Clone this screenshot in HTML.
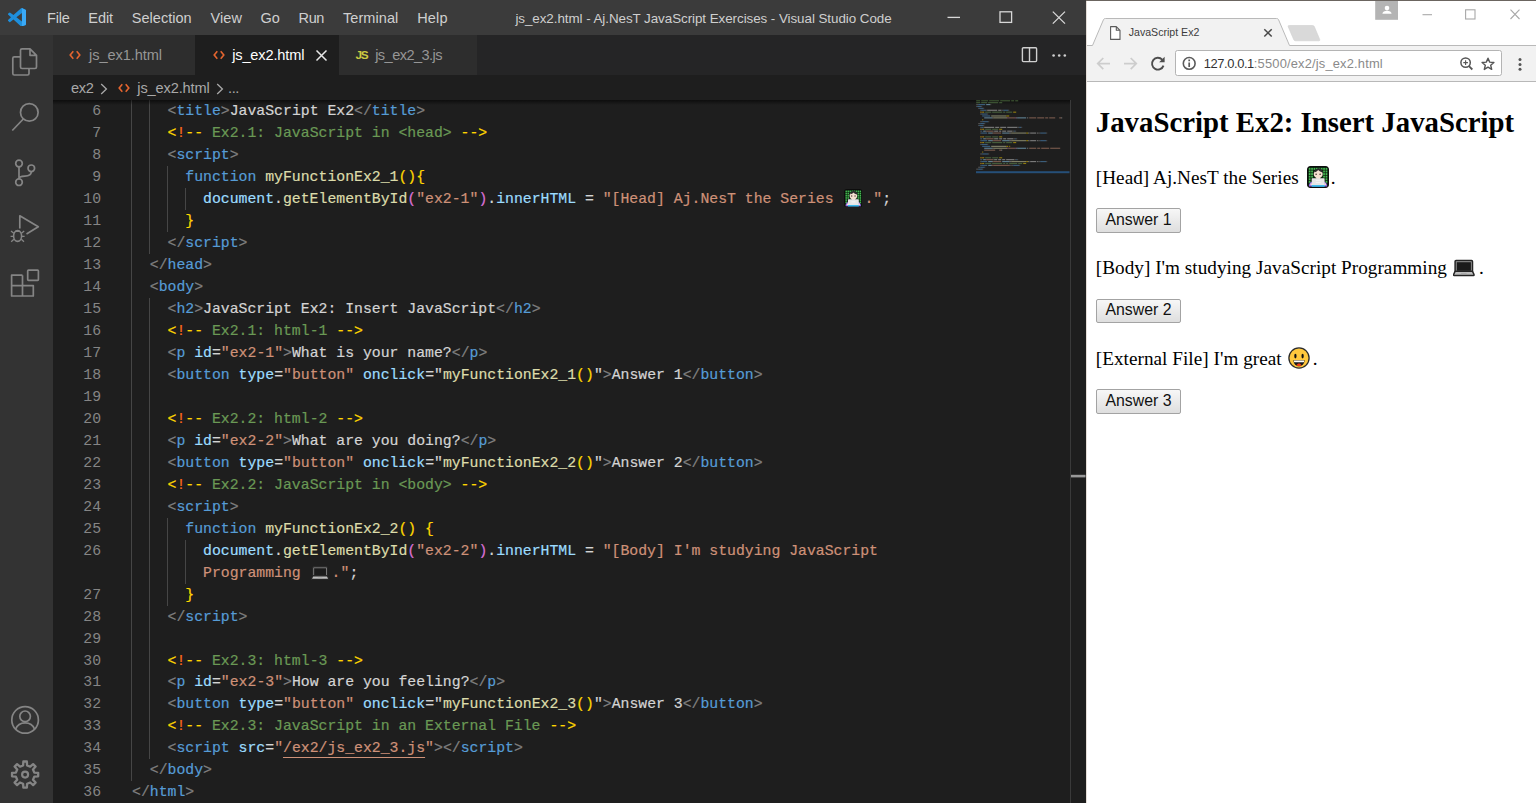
<!DOCTYPE html>
<html lang="en">
<head>
<meta charset="utf-8">
<title>js_ex2.html - Aj.NesT JavaScript Exercises - Visual Studio Code</title>
<style>
*{box-sizing:border-box}
html,body{margin:0;padding:0;width:1536px;height:803px;overflow:hidden;background:#fff}
body{position:relative;font-family:"Liberation Sans",sans-serif}
.abs{position:absolute}
/* ---------- VS Code ---------- */
#vsc{position:absolute;left:0;top:0;width:1085.5px;height:803px;background:#1e1e1e;overflow:hidden;color:#ccc;font-family:"Liberation Sans",sans-serif}
#titlebar{position:absolute;left:0;top:0;width:1086px;height:35px;background:#3b3b3b}
#titlebar .m{position:absolute;top:0.8px;height:35px;line-height:35px;font-size:15.3px;color:#cfcfcf;white-space:pre}
#wtitle{position:absolute;top:0;height:35px;line-height:35px;left:515px;font-size:15.3px;color:#cfcfcf;white-space:pre}
#actbar{position:absolute;left:0;top:35px;width:53px;height:768px;background:#333333}
#tabs{position:absolute;left:53px;top:35px;width:1033px;height:40px;background:#252526}
.tab{position:absolute;top:0;height:40px;background:#2d2d2d;font-size:15.6px;line-height:40px;color:#969696;white-space:pre}
.tab.act{background:#1e1e1e;color:#fff}
.tab .lbl{position:absolute;top:0.4px}
#crumbs{position:absolute;left:53px;top:75px;width:1033px;height:25px;background:#1e1e1e;font-size:15.3px;line-height:25px;color:#a9a9a9;white-space:pre}
#crumbs span{position:absolute;top:0.7px}
#edshadow{position:absolute;left:53px;top:100px;width:1018px;height:5px;background:linear-gradient(#000 0,rgba(0,0,0,.0) 100%);opacity:.55}
/* code */
.cl,.ln{position:absolute;height:22px;line-height:22px;font-family:"Liberation Mono",monospace;font-size:14.815px;white-space:pre}
.cl{left:132px;color:#d4d4d4;-webkit-text-stroke:0.2px currentColor}
.ln{left:53px;width:48.1px;text-align:right;color:#858585}
.ig{position:absolute;width:1px;background:#464646;display:block}
.g{color:#808080}.t{color:#569cd6}.a{color:#9cdcfe}.s{color:#ce9178}.x{color:#d4d4d4}.c{color:#6a9955}
.y{color:#ffd700}.p{color:#da70d6}.f{color:#dcdcaa}.k{color:#569cd6}.v{color:#9cdcfe}.o{color:#ff6a1a}
.u{text-decoration:underline;text-underline-offset:4.6px;text-decoration-thickness:1px}
.em{display:inline-block;width:22px;height:22px;vertical-align:top;position:relative}
.em svg{position:absolute;left:1.3px;top:0.9px}
/* ---------- Chrome ---------- */
#chr{position:absolute;left:1086px;top:0;width:450px;height:803px;background:#fff;overflow:visible;font-family:"Liberation Sans",sans-serif}
#chr .topline{position:absolute;left:0;top:0;width:450px;height:1px;background:#6b6560}
#chr .leftline{position:absolute;left:-0.500px;top:1px;width:1px;height:802px;background:#e4ddd7}
#toolbar{position:absolute;left:1px;top:46px;width:449px;height:35.700px;background:#f2f2f2;border-bottom:1px solid #b8b8b8}
#omni{position:absolute;left:89.3px;top:50.300px;width:326.500px;height:26.100px;background:#fff;border:1px solid #b4b4b4;border-radius:2.5px}
#url{position:absolute;left:117.700px;top:51px;height:25.5px;line-height:25.5px;font-size:12.9px;color:#8a8a8a;white-space:pre}
#url b{font-weight:normal;color:#333;letter-spacing:-0.400px}
#url{letter-spacing:0.170px}
#tabtitle{position:absolute;left:42.7px;top:19px;height:26px;line-height:27px;font-size:10.6px;color:#3c3c3c;white-space:pre}
#page{position:absolute;left:0;top:0;width:450px;height:803px;font-family:"Liberation Serif",serif;color:#000;font-size:19.2px}
#page h2{position:absolute;left:9.8px;top:104.5px;font-size:28.8px;line-height:34px;margin:0;font-weight:bold;white-space:nowrap}
#page p{letter-spacing:0.03px;position:absolute;left:9.8px;margin:0;line-height:22px;white-space:nowrap}
#page button{font-family:"Liberation Sans",sans-serif;font-size:15.85px;color:#111;padding:0.400px 7.900px 2px;margin:0;border:1px solid #a3a3a3;border-radius:2px;background:linear-gradient(#f7f7f7,#dedede);height:24.6px;line-height:19px;display:block;position:absolute;left:10.2px;width:84.5px;text-align:center}
#page .emo{vertical-align:-4.4px;margin:0 2.300px 0 3px}
#ex2-3 .emo{margin-left:1.900px;margin-right:2.300px}
#ex2-2 .emo{margin-left:1.700px;margin-right:3.600px}

</style>
</head>
<body>
<div id="vsc">
  <div id="titlebar">
<svg class="abs" style="left:7.600px;top:7.600px" width="18.600" height="18.600" viewBox="0 0 100 100"><path fill="#1e8fdc" fill-rule="evenodd" d="M74.900 99.300a6.200 6.200 0 0 0 5-.2l20.600-9.900A6.250 6.250 0 0 0 100 83.600V16.400a6.250 6.250 0 0 0-3.500-5.600L75.900.9a6.200 6.200 0 0 0-7.100 1.200L29.400 38 12.200 25a4.200 4.200 0 0 0-5.300.2L1.400 30.200a4.200 4.200 0 0 0 0 6.200L16.200 50 1.400 63.600a4.200 4.200 0 0 0 0 6.200l5.500 5a4.200 4.200 0 0 0 5.300.2l17.200-13 39.400 36a6.200 6.200 0 0 0 2.100 1.400zM75 27.300 45.100 50 75 72.700z"/><path fill="#3aa9f6" d="M75 .6 96.500 10.800Q100 12.600 100 16.400V83.600Q100 87.400 96.500 89.200L75 99.400Z"/></svg>
<span class="m" style="left:47.0px;font-size:14.50px;letter-spacing:-0.216px;">File</span>
<span class="m" style="left:88.3px;font-size:14.50px;letter-spacing:-0.071px;">Edit</span>
<span class="m" style="left:131.8px;font-size:14.50px;letter-spacing:0.028px;">Selection</span>
<span class="m" style="left:210.5px;font-size:14.50px;letter-spacing:0.083px;">View</span>
<span class="m" style="left:260.5px;font-size:14.50px;letter-spacing:0.079px;">Go</span>
<span class="m" style="left:298.6px;font-size:14.50px;letter-spacing:-0.400px;">Run</span>
<span class="m" style="left:343.0px;font-size:14.50px;letter-spacing:0.063px;">Terminal</span>
<span class="m" style="left:417.2px;font-size:14.50px;letter-spacing:0.170px;">Help</span>
<span class="m" style="left:515.4px;font-size:13.40px;letter-spacing:-0.058px;">js_ex2.html - Aj.NesT JavaScript Exercises - Visual Studio Code</span>
<svg class="abs" style="left:940px;top:5px" width="140" height="26" viewBox="0 0 140 26" fill="none" stroke="#d8d8d8" stroke-width="1.3"><path d="M7.500 12.400H20"/><rect x="60" y="6.800" width="11.600" height="10.600"/><path d="M112.800 6.600 125 18.600M125 6.600 112.800 18.600"/></svg>
  </div>
  <div id="actbar">
<svg class="abs" style="left:0;top:0" width="53" height="768" viewBox="0 35 53 768" fill="none" stroke="#858585" stroke-width="1.700" stroke-linejoin="round" stroke-linecap="butt">
<path d="M30 48.800H22a1.500 1.500 0 0 0-1.500 1.500V67a1.500 1.500 0 0 0 1.500 1.500H35a1.500 1.500 0 0 0 1.500-1.500V55.300L30 48.800V55.300H36.500"/>
<path d="M20.500 56.800H14.300a1.500 1.500 0 0 0-1.500 1.500V73.500a1.500 1.500 0 0 0 1.500 1.500H27.500a1.500 1.500 0 0 0 1.500-1.500V68.500"/>
<circle cx="29.300" cy="112.400" r="8.800"/><path d="M23.300 119 12.300 130.500"/>
<circle cx="19" cy="163.500" r="3.300"/><circle cx="31.300" cy="168.300" r="3.300"/><circle cx="19" cy="182.200" r="3.300"/><path d="M19 166.800V178.900M31.300 171.600c0 3.500-3 4.600-6.500 4.600-3.200 0-5.800 0.700-5.800 2.700"/>
<path d="M19.800 228.500V215.800L38.300 226.800 26.500 234"/>
<ellipse cx="17.600" cy="236" rx="4" ry="5.400" stroke-width="1.600"/><path stroke-width="1.300" d="M13.800 233.300 11 231M13.600 236.400H10.600M13.900 239.200 11.200 241.700M21.400 233.300 24.200 231M21.600 236.400H24.600M21.300 239.200 24 241.700M15 231.400h5.200"/>
<path d="M22.500 275.200H11.600V296H33.300V285.600H11.600M22.500 275.200V296"/><rect x="27.700" y="270.200" width="10.700" height="10.200" rx="0.800"/>
<circle cx="25.100" cy="719.900" r="13.300"/><circle cx="25.100" cy="716.300" r="5.300"/><path d="M15.600 729.200c1.600-4.200 5-6.300 9.500-6.300s7.900 2.100 9.500 6.300"/>
<path stroke-width="2.300" d="M23.12 765.41 L23.34 761.52 L26.86 761.52 L27.08 765.41 L30.20 766.70 L33.11 764.11 L35.59 766.59 L33.00 769.50 L34.29 772.62 L38.18 772.84 L38.18 776.36 L34.29 776.58 L33.00 779.70 L35.59 782.61 L33.11 785.09 L30.20 782.50 L27.08 783.79 L26.86 787.68 L23.34 787.68 L23.12 783.79 L20.00 782.50 L17.09 785.09 L14.61 782.61 L17.20 779.70 L15.91 776.58 L12.02 776.36 L12.02 772.84 L15.91 772.62 L17.20 769.50 L14.61 766.59 L17.09 764.11 L20.00 766.70Z"/><circle cx="25.100" cy="774.600" r="3" stroke-width="2.200"/>
</svg>
  </div>
  <div id="tabs">
<div class="tab" style="left:0;width:142px"><svg class="abs" style="left:16px;top:15px" width="12" height="10" viewBox="0 0 12 10" fill="none" stroke="#e5652f" stroke-width="1.600"><path d="M4.300 1.300 1.200 5l3.100 3.700M7.700 1.300 10.800 5 7.700 8.700"/></svg><span class="lbl" style="left:36.0px;font-size:14.60px;letter-spacing:-0.077px;">js_ex1.html</span></div>
<div class="tab act" style="left:142px;width:143.600px"><svg class="abs" style="left:17.5px;top:15px" width="12" height="10" viewBox="0 0 12 10" fill="none" stroke="#e5652f" stroke-width="1.600"><path d="M4.300 1.300 1.200 5l3.100 3.700M7.700 1.300 10.800 5 7.700 8.700"/></svg><span class="lbl" style="left:37.2px;font-size:14.60px;letter-spacing:-0.158px;">js_ex2.html</span><svg class="abs" style="left:120px;top:14px" width="13" height="13" viewBox="0 0 13 13" fill="none" stroke="#e8e8e8" stroke-width="1.500"><path d="M1.500 1.500 11.500 11.500M11.500 1.500 1.500 11.500"/></svg></div>
<div class="tab" style="left:285.600px;width:138.500px"><span class="lbl" style="left:17.0px;font-size:11.80px;letter-spacing:-1.367px;color:#cbcb41;font-weight:bold;top:-0.500px">JS</span><span class="lbl" style="left:36.6px;font-size:14.60px;letter-spacing:-0.568px;">js_ex2_3.js</span></div>
<svg class="abs" style="left:968px;top:11px" width="18" height="18" viewBox="0 0 18 18" fill="none" stroke="#d0d0d0" stroke-width="1.400"><rect x="1.400" y="1.800" width="14.200" height="13.800" rx="1"/><path d="M8.500 1.800V15.600"/></svg>
<svg class="abs" style="left:998px;top:18px" width="16" height="5" viewBox="0 0 16 5" fill="#d0d0d0"><circle cx="2.600" cy="2.500" r="1.300"/><circle cx="8.200" cy="2.500" r="1.300"/><circle cx="13.800" cy="2.500" r="1.300"/></svg>
  </div>
  <div id="crumbs">
<span style="left:18.0px;font-size:14.60px;letter-spacing:-0.380px;">ex2</span>
<svg class="abs" style="left:47.0px;top:7.5px" width="8" height="12" viewBox="0 0 8 12" fill="none" stroke="#a9a9a9" stroke-width="1.300"><path d="M1.200 1 6.400 6 1.200 11"/></svg>
<svg class="abs" style="left:65px;top:7.8px" width="12" height="10" viewBox="0 0 12 10" fill="none" stroke="#e5652f" stroke-width="1.600"><path d="M4.300 1.300 1.200 5l3.100 3.700M7.700 1.300 10.800 5 7.700 8.700"/></svg>
<span style="left:84.3px;font-size:14.60px;letter-spacing:-0.131px;">js_ex2.html</span>
<svg class="abs" style="left:162.6px;top:7.5px" width="8" height="12" viewBox="0 0 8 12" fill="none" stroke="#a9a9a9" stroke-width="1.300"><path d="M1.200 1 6.400 6 1.200 11"/></svg>
<span style="left:175.1px;font-size:14.60px;letter-spacing:-0.523px;">...</span>
  </div>
  <div id="editor">
<i class="ig" style="left:131.3px;top:100.20px;height:681.13px"></i>
<i class="ig" style="left:149.1px;top:100.20px;height:153.80px"></i>
<i class="ig" style="left:149.1px;top:297.95px;height:461.41px"></i>
<i class="ig" style="left:166.9px;top:166.12px;height:65.92px"></i>
<i class="ig" style="left:166.9px;top:517.67px;height:87.89px"></i>
<i class="ig" style="left:184.6px;top:188.09px;height:21.97px"></i>
<i class="ig" style="left:184.6px;top:539.64px;height:43.94px"></i>
<div class="ln" style="top:100.20px">6</div>
<div class="cl" style="top:100.20px">    <span class="g">&lt;</span><span class="t">title</span><span class="g">&gt;</span><span class="x">JavaScript Ex2</span><span class="g">&lt;/</span><span class="t">title</span><span class="g">&gt;</span></div>
<div class="ln" style="top:122.17px">7</div>
<div class="cl" style="top:122.17px">    <span class="y">&lt;</span><span class="o">!</span><span class="y">--</span><span class="c"> Ex2.1: JavaScript in &lt;head&gt; </span><span class="y">--&gt;</span></div>
<div class="ln" style="top:144.14px">8</div>
<div class="cl" style="top:144.14px">    <span class="g">&lt;</span><span class="t">script</span><span class="g">&gt;</span></div>
<div class="ln" style="top:166.12px">9</div>
<div class="cl" style="top:166.12px">      <span class="k">function</span> <span class="f">myFunctionEx2_1</span><span class="y">(){</span></div>
<div class="ln" style="top:188.09px">10</div>
<div class="cl" style="top:188.09px">        <span class="v">document</span><span class="x">.</span><span class="f">getElementById</span><span class="p">(</span><span class="s">"ex2-1"</span><span class="p">)</span><span class="x">.</span><span class="v">innerHTML</span><span class="x"> = </span><span class="s">"[Head] Aj.NesT the Series </span><span class="em e1"><svg class="emo" role="img" aria-label="👨🏻‍💻" width="18.5" height="18.5" viewBox="0 0 22 22"><rect x="0.6" y="0.6" width="20.800" height="20.800" rx="3.200" fill="#0b240f" stroke="#0d0d0d" stroke-width="1.200"/><g fill="#45b852"><rect x="1.8" y="1.9" width="1.7" height="1.9"/><rect x="4.2" y="1.9" width="1.7" height="1.9"/><rect x="6.6" y="1.9" width="1.7" height="1.9"/><rect x="9.0" y="1.9" width="1.7" height="1.9"/><rect x="11.4" y="1.9" width="1.7" height="1.9"/><rect x="13.8" y="1.9" width="1.7" height="1.9"/><rect x="16.2" y="1.9" width="1.7" height="1.9"/><rect x="18.6" y="1.9" width="1.7" height="1.9"/><rect x="1.8" y="4.5" width="1.7" height="1.9"/><rect x="4.2" y="4.5" width="1.7" height="1.9"/><rect x="16.2" y="4.5" width="1.7" height="1.9"/><rect x="18.6" y="4.5" width="1.7" height="1.9"/><rect x="1.8" y="7.1" width="1.7" height="1.9"/><rect x="4.2" y="7.1" width="1.7" height="1.9"/><rect x="16.2" y="7.1" width="1.7" height="1.9"/><rect x="18.6" y="7.1" width="1.7" height="1.9"/><rect x="1.8" y="9.7" width="1.7" height="1.9"/><rect x="4.2" y="9.7" width="1.7" height="1.9"/><rect x="16.2" y="9.7" width="1.7" height="1.9"/><rect x="18.6" y="9.7" width="1.7" height="1.9"/><rect x="1.8" y="12.3" width="1.7" height="1.9"/><rect x="18.6" y="12.3" width="1.7" height="1.9"/><rect x="1.8" y="14.9" width="1.7" height="1.9"/><rect x="18.6" y="14.9" width="1.7" height="1.9"/></g><path d="M1.800 20.600c0-3 1.400-4.800 3.800-5h10.800c2.400 0.200 3.800 2 3.800 5z" fill="#9263e6"/><rect x="9.300" y="11.200" width="3.800" height="2.200" fill="#ecd0bd"/><ellipse cx="11.200" cy="8" rx="4.500" ry="4.300" fill="#f5e0d0"/><path d="M7.300 6.300c0.200-1.800 1.200-3.400 3.400-3.900 2.600-0.500 4.900 1 5.100 3.700 0 0.300-0.100 0.500-0.300 0.300-1.700-0.200-3.300-1.100-4.300-2.300-0.900 1.200-2.100 1.900-3.900 2.200z" fill="#2b2b2b"/><rect x="8.400" y="7.500" width="1.500" height="1.600" rx="0.400" fill="#5e4d45"/><rect x="12.400" y="7.500" width="1.500" height="1.600" rx="0.400" fill="#5e4d45"/><rect x="4.700" y="12.300" width="12.900" height="7.600" rx="0.500" fill="#e6e6e6"/><rect x="8.800" y="14.300" width="4.800" height="0.700" fill="#f6f6f6"/><rect x="8.800" y="16.200" width="4.800" height="0.700" fill="#f6f6f6"/><rect x="3.300" y="17.300" width="1.700" height="2" rx="0.700" fill="#f5e0d0"/><rect x="17.300" y="17.300" width="1.700" height="2" rx="0.700" fill="#f5e0d0"/><rect x="4.700" y="19.100" width="12.900" height="1.700" fill="#2fb7ea"/></svg></span><span class="s">."</span><span class="x">;</span></div>
<div class="ln" style="top:210.06px">11</div>
<div class="cl" style="top:210.06px">      <span class="y">}</span></div>
<div class="ln" style="top:232.03px">12</div>
<div class="cl" style="top:232.03px">    <span class="g">&lt;/</span><span class="t">script</span><span class="g">&gt;</span></div>
<div class="ln" style="top:254.00px">13</div>
<div class="cl" style="top:254.00px">  <span class="g">&lt;/</span><span class="t">head</span><span class="g">&gt;</span></div>
<div class="ln" style="top:275.98px">14</div>
<div class="cl" style="top:275.98px">  <span class="g">&lt;</span><span class="t">body</span><span class="g">&gt;</span></div>
<div class="ln" style="top:297.95px">15</div>
<div class="cl" style="top:297.95px">    <span class="g">&lt;</span><span class="t">h2</span><span class="g">&gt;</span><span class="x">JavaScript Ex2: Insert JavaScript</span><span class="g">&lt;/</span><span class="t">h2</span><span class="g">&gt;</span></div>
<div class="ln" style="top:319.92px">16</div>
<div class="cl" style="top:319.92px">    <span class="y">&lt;</span><span class="o">!</span><span class="y">--</span><span class="c"> Ex2.1: html-1 </span><span class="y">--&gt;</span></div>
<div class="ln" style="top:341.89px">17</div>
<div class="cl" style="top:341.89px">    <span class="g">&lt;</span><span class="t">p</span> <span class="a">id</span><span class="x">=</span><span class="s">"ex2-1"</span><span class="g">&gt;</span><span class="x">What is your name?</span><span class="g">&lt;/</span><span class="t">p</span><span class="g">&gt;</span></div>
<div class="ln" style="top:363.86px">18</div>
<div class="cl" style="top:363.86px">    <span class="g">&lt;</span><span class="t">button</span> <span class="a">type</span><span class="x">=</span><span class="s">"button"</span> <span class="a">onclick</span><span class="x">=</span><span class="x">"</span><span class="f">myFunctionEx2_1</span><span class="y">()</span><span class="x">"</span><span class="g">&gt;</span><span class="x">Answer 1</span><span class="g">&lt;/</span><span class="t">button</span><span class="g">&gt;</span></div>
<div class="ln" style="top:385.84px">19</div>
<div class="ln" style="top:407.81px">20</div>
<div class="cl" style="top:407.81px">    <span class="y">&lt;</span><span class="o">!</span><span class="y">--</span><span class="c"> Ex2.2: html-2 </span><span class="y">--&gt;</span></div>
<div class="ln" style="top:429.78px">21</div>
<div class="cl" style="top:429.78px">    <span class="g">&lt;</span><span class="t">p</span> <span class="a">id</span><span class="x">=</span><span class="s">"ex2-2"</span><span class="g">&gt;</span><span class="x">What are you doing?</span><span class="g">&lt;/</span><span class="t">p</span><span class="g">&gt;</span></div>
<div class="ln" style="top:451.75px">22</div>
<div class="cl" style="top:451.75px">    <span class="g">&lt;</span><span class="t">button</span> <span class="a">type</span><span class="x">=</span><span class="s">"button"</span> <span class="a">onclick</span><span class="x">=</span><span class="x">"</span><span class="f">myFunctionEx2_2</span><span class="y">()</span><span class="x">"</span><span class="g">&gt;</span><span class="x">Answer 2</span><span class="g">&lt;/</span><span class="t">button</span><span class="g">&gt;</span></div>
<div class="ln" style="top:473.72px">23</div>
<div class="cl" style="top:473.72px">    <span class="y">&lt;</span><span class="o">!</span><span class="y">--</span><span class="c"> Ex2.2: JavaScript in &lt;body&gt; </span><span class="y">--&gt;</span></div>
<div class="ln" style="top:495.70px">24</div>
<div class="cl" style="top:495.70px">    <span class="g">&lt;</span><span class="t">script</span><span class="g">&gt;</span></div>
<div class="ln" style="top:517.67px">25</div>
<div class="cl" style="top:517.67px">      <span class="k">function</span> <span class="f">myFunctionEx2_2</span><span class="y">()</span> <span class="y">{</span></div>
<div class="ln" style="top:539.64px">26</div>
<div class="cl" style="top:539.64px">        <span class="v">document</span><span class="x">.</span><span class="f">getElementById</span><span class="p">(</span><span class="s">"ex2-2"</span><span class="p">)</span><span class="x">.</span><span class="v">innerHTML</span><span class="x"> = </span><span class="s">"[Body] I'm studying JavaScript</span></div>
<div class="cl" style="top:561.61px">        <span class="s">Programming </span><span class="em e2"><svg class="emo" role="img" aria-label="💻" width="18.5" height="18.5" viewBox="0 0 22 22"><path d="M3 4.600h15.600a0.900 0.900 0 0 1 0.900 0.900v9.900h-17.400v-9.900a0.900 0.900 0 0 1 0.900-0.900z" fill="#9a9a9a" stroke="#242424" stroke-width="1.500" stroke-linejoin="round"/><rect x="3.700" y="6.200" width="14.200" height="8.600" fill="#1b1b1b"/><path d="M2.100 15.400h17.400l1.600 3.200a0.600 0.600 0 0 1-0.550 0.900h-19.500a0.600 0.600 0 0 1-0.550-0.900z" fill="#bdbdbd" stroke="#242424" stroke-width="1.400" stroke-linejoin="round"/><rect x="8" y="17.300" width="5.600" height="0.900" fill="#a3a3a3"/></svg></span><span class="s">."</span><span class="x">;</span></div>
<div class="ln" style="top:583.58px">27</div>
<div class="cl" style="top:583.58px">      <span class="y">}</span></div>
<div class="ln" style="top:605.56px">28</div>
<div class="cl" style="top:605.56px">    <span class="g">&lt;/</span><span class="t">script</span><span class="g">&gt;</span></div>
<div class="ln" style="top:627.53px">29</div>
<div class="ln" style="top:649.50px">30</div>
<div class="cl" style="top:649.50px">    <span class="y">&lt;</span><span class="o">!</span><span class="y">--</span><span class="c"> Ex2.3: html-3 </span><span class="y">--&gt;</span></div>
<div class="ln" style="top:671.47px">31</div>
<div class="cl" style="top:671.47px">    <span class="g">&lt;</span><span class="t">p</span> <span class="a">id</span><span class="x">=</span><span class="s">"ex2-3"</span><span class="g">&gt;</span><span class="x">How are you feeling?</span><span class="g">&lt;/</span><span class="t">p</span><span class="g">&gt;</span></div>
<div class="ln" style="top:693.44px">32</div>
<div class="cl" style="top:693.44px">    <span class="g">&lt;</span><span class="t">button</span> <span class="a">type</span><span class="x">=</span><span class="s">"button"</span> <span class="a">onclick</span><span class="x">=</span><span class="x">"</span><span class="f">myFunctionEx2_3</span><span class="y">()</span><span class="x">"</span><span class="g">&gt;</span><span class="x">Answer 3</span><span class="g">&lt;/</span><span class="t">button</span><span class="g">&gt;</span></div>
<div class="ln" style="top:715.42px">33</div>
<div class="cl" style="top:715.42px">    <span class="y">&lt;</span><span class="o">!</span><span class="y">--</span><span class="c"> Ex2.3: JavaScript in an External File </span><span class="y">--&gt;</span></div>
<div class="ln" style="top:737.39px">34</div>
<div class="cl" style="top:737.39px">    <span class="g">&lt;</span><span class="t">script</span> <span class="a">src</span><span class="x">=</span><span class="s">"</span><span class="s u">/ex2/js_ex2_3.js</span><span class="s">"</span><span class="g">&gt;</span><span class="g">&lt;/</span><span class="t">script</span><span class="g">&gt;</span></div>
<div class="ln" style="top:759.36px">35</div>
<div class="cl" style="top:759.36px">  <span class="g">&lt;/</span><span class="t">body</span><span class="g">&gt;</span></div>
<div class="ln" style="top:781.33px">36</div>
<div class="cl" style="top:781.33px"><span class="g">&lt;/</span><span class="t">html</span><span class="g">&gt;</span></div>
  </div>
  <div id="edshadow"></div>
<svg class="abs" style="left:0;top:0" width="1086" height="803" viewBox="0 0 1086 803">
<g opacity="0.5">
<rect x="976.20" y="100.20" width="4.00" height="1.150" fill="#6a9955"/>
<rect x="981.20" y="100.20" width="7.00" height="1.150" fill="#6a9955"/>
<rect x="989.20" y="100.20" width="10.00" height="1.150" fill="#6a9955"/>
<rect x="1000.20" y="100.20" width="10.00" height="1.150" fill="#6a9955"/>
<rect x="1011.20" y="100.20" width="3.00" height="1.150" fill="#6a9955"/>
<rect x="1015.20" y="100.20" width="3.00" height="1.150" fill="#6a9955"/>
<rect x="976.20" y="102.10" width="4.00" height="1.150" fill="#6a9955"/>
<rect x="981.20" y="102.10" width="6.00" height="1.150" fill="#6a9955"/>
<rect x="988.20" y="102.10" width="10.00" height="1.150" fill="#6a9955"/>
<rect x="999.20" y="102.10" width="3.00" height="1.150" fill="#6a9955"/>
<rect x="976.20" y="104.00" width="2.00" height="1.150" fill="#808080"/>
<rect x="978.20" y="104.00" width="7.00" height="1.150" fill="#569cd6"/>
<rect x="986.20" y="104.00" width="4.00" height="1.150" fill="#9cdcfe"/>
<rect x="990.20" y="104.00" width="1.00" height="1.150" fill="#808080"/>
<rect x="976.20" y="105.90" width="1.00" height="1.150" fill="#808080"/>
<rect x="977.20" y="105.90" width="4.00" height="1.150" fill="#569cd6"/>
<rect x="981.20" y="105.90" width="1.00" height="1.150" fill="#808080"/>
<rect x="978.20" y="107.80" width="1.00" height="1.150" fill="#808080"/>
<rect x="979.20" y="107.80" width="4.00" height="1.150" fill="#569cd6"/>
<rect x="983.20" y="107.80" width="1.00" height="1.150" fill="#808080"/>
<rect x="980.20" y="109.70" width="1.00" height="1.150" fill="#808080"/>
<rect x="981.20" y="109.70" width="5.00" height="1.150" fill="#569cd6"/>
<rect x="986.20" y="109.70" width="1.00" height="1.150" fill="#808080"/>
<rect x="987.20" y="109.70" width="10.00" height="1.150" fill="#d4d4d4"/>
<rect x="998.20" y="109.70" width="3.00" height="1.150" fill="#d4d4d4"/>
<rect x="1001.20" y="109.70" width="2.00" height="1.150" fill="#808080"/>
<rect x="1003.20" y="109.70" width="5.00" height="1.150" fill="#569cd6"/>
<rect x="1008.20" y="109.70" width="1.00" height="1.150" fill="#808080"/>
<rect x="980.20" y="111.60" width="1.00" height="1.150" fill="#ffd700"/>
<rect x="981.20" y="111.60" width="1.00" height="1.150" fill="#ff8c1a"/>
<rect x="982.20" y="111.60" width="2.00" height="1.150" fill="#ffd700"/>
<rect x="985.20" y="111.60" width="6.00" height="1.150" fill="#6a9955"/>
<rect x="992.20" y="111.60" width="10.00" height="1.150" fill="#6a9955"/>
<rect x="1003.20" y="111.60" width="2.00" height="1.150" fill="#6a9955"/>
<rect x="1006.20" y="111.60" width="6.00" height="1.150" fill="#6a9955"/>
<rect x="1013.20" y="111.60" width="3.00" height="1.150" fill="#ffd700"/>
<rect x="980.20" y="113.50" width="1.00" height="1.150" fill="#808080"/>
<rect x="981.20" y="113.50" width="6.00" height="1.150" fill="#569cd6"/>
<rect x="987.20" y="113.50" width="1.00" height="1.150" fill="#808080"/>
<rect x="982.20" y="115.40" width="8.00" height="1.150" fill="#569cd6"/>
<rect x="991.20" y="115.40" width="15.00" height="1.150" fill="#dcdcaa"/>
<rect x="1006.20" y="115.40" width="3.00" height="1.150" fill="#ffd700"/>
<rect x="984.20" y="117.30" width="8.00" height="1.150" fill="#9cdcfe"/>
<rect x="992.20" y="117.30" width="1.00" height="1.150" fill="#d4d4d4"/>
<rect x="993.20" y="117.30" width="14.00" height="1.150" fill="#dcdcaa"/>
<rect x="1007.20" y="117.30" width="1.00" height="1.150" fill="#da70d6"/>
<rect x="1008.20" y="117.30" width="7.00" height="1.150" fill="#ce9178"/>
<rect x="1015.20" y="117.30" width="1.00" height="1.150" fill="#da70d6"/>
<rect x="1016.20" y="117.30" width="1.00" height="1.150" fill="#d4d4d4"/>
<rect x="1017.20" y="117.30" width="9.00" height="1.150" fill="#9cdcfe"/>
<rect x="1027.20" y="117.30" width="1.00" height="1.150" fill="#d4d4d4"/>
<rect x="1029.20" y="117.30" width="7.00" height="1.150" fill="#ce9178"/>
<rect x="1037.20" y="117.30" width="7.00" height="1.150" fill="#ce9178"/>
<rect x="1045.20" y="117.30" width="3.00" height="1.150" fill="#ce9178"/>
<rect x="1049.20" y="117.30" width="6.00" height="1.150" fill="#ce9178"/>
<rect x="1059.20" y="117.30" width="2.00" height="1.150" fill="#ce9178"/>
<rect x="1061.20" y="117.30" width="1.00" height="1.150" fill="#d4d4d4"/>
<rect x="982.20" y="119.20" width="1.00" height="1.150" fill="#ffd700"/>
<rect x="980.20" y="121.10" width="2.00" height="1.150" fill="#808080"/>
<rect x="982.20" y="121.10" width="6.00" height="1.150" fill="#569cd6"/>
<rect x="988.20" y="121.10" width="1.00" height="1.150" fill="#808080"/>
<rect x="978.20" y="123.00" width="2.00" height="1.150" fill="#808080"/>
<rect x="980.20" y="123.00" width="4.00" height="1.150" fill="#569cd6"/>
<rect x="984.20" y="123.00" width="1.00" height="1.150" fill="#808080"/>
<rect x="978.20" y="124.90" width="1.00" height="1.150" fill="#808080"/>
<rect x="979.20" y="124.90" width="4.00" height="1.150" fill="#569cd6"/>
<rect x="983.20" y="124.90" width="1.00" height="1.150" fill="#808080"/>
<rect x="980.20" y="126.80" width="1.00" height="1.150" fill="#808080"/>
<rect x="981.20" y="126.80" width="2.00" height="1.150" fill="#569cd6"/>
<rect x="983.20" y="126.80" width="1.00" height="1.150" fill="#808080"/>
<rect x="984.20" y="126.80" width="10.00" height="1.150" fill="#d4d4d4"/>
<rect x="995.20" y="126.80" width="4.00" height="1.150" fill="#d4d4d4"/>
<rect x="1000.20" y="126.80" width="6.00" height="1.150" fill="#d4d4d4"/>
<rect x="1007.20" y="126.80" width="10.00" height="1.150" fill="#d4d4d4"/>
<rect x="1017.20" y="126.80" width="2.00" height="1.150" fill="#808080"/>
<rect x="1019.20" y="126.80" width="2.00" height="1.150" fill="#569cd6"/>
<rect x="1021.20" y="126.80" width="1.00" height="1.150" fill="#808080"/>
<rect x="980.20" y="128.70" width="1.00" height="1.150" fill="#ffd700"/>
<rect x="981.20" y="128.70" width="1.00" height="1.150" fill="#ff8c1a"/>
<rect x="982.20" y="128.70" width="2.00" height="1.150" fill="#ffd700"/>
<rect x="985.20" y="128.70" width="6.00" height="1.150" fill="#6a9955"/>
<rect x="992.20" y="128.70" width="6.00" height="1.150" fill="#6a9955"/>
<rect x="999.20" y="128.70" width="3.00" height="1.150" fill="#ffd700"/>
<rect x="980.20" y="130.60" width="1.00" height="1.150" fill="#808080"/>
<rect x="981.20" y="130.60" width="1.00" height="1.150" fill="#569cd6"/>
<rect x="983.20" y="130.60" width="2.00" height="1.150" fill="#9cdcfe"/>
<rect x="985.20" y="130.60" width="1.00" height="1.150" fill="#d4d4d4"/>
<rect x="986.20" y="130.60" width="7.00" height="1.150" fill="#ce9178"/>
<rect x="993.20" y="130.60" width="1.00" height="1.150" fill="#808080"/>
<rect x="994.20" y="130.60" width="4.00" height="1.150" fill="#d4d4d4"/>
<rect x="999.20" y="130.60" width="2.00" height="1.150" fill="#d4d4d4"/>
<rect x="1002.20" y="130.60" width="4.00" height="1.150" fill="#d4d4d4"/>
<rect x="1007.20" y="130.60" width="5.00" height="1.150" fill="#d4d4d4"/>
<rect x="1012.20" y="130.60" width="2.00" height="1.150" fill="#808080"/>
<rect x="1014.20" y="130.60" width="1.00" height="1.150" fill="#569cd6"/>
<rect x="1015.20" y="130.60" width="1.00" height="1.150" fill="#808080"/>
<rect x="980.20" y="132.50" width="1.00" height="1.150" fill="#808080"/>
<rect x="981.20" y="132.50" width="6.00" height="1.150" fill="#569cd6"/>
<rect x="988.20" y="132.50" width="4.00" height="1.150" fill="#9cdcfe"/>
<rect x="992.20" y="132.50" width="1.00" height="1.150" fill="#d4d4d4"/>
<rect x="993.20" y="132.50" width="8.00" height="1.150" fill="#ce9178"/>
<rect x="1002.20" y="132.50" width="7.00" height="1.150" fill="#9cdcfe"/>
<rect x="1009.20" y="132.50" width="1.00" height="1.150" fill="#d4d4d4"/>
<rect x="1010.20" y="132.50" width="1.00" height="1.150" fill="#d4d4d4"/>
<rect x="1011.20" y="132.50" width="15.00" height="1.150" fill="#dcdcaa"/>
<rect x="1026.20" y="132.50" width="2.00" height="1.150" fill="#ffd700"/>
<rect x="1028.20" y="132.50" width="1.00" height="1.150" fill="#d4d4d4"/>
<rect x="1029.20" y="132.50" width="1.00" height="1.150" fill="#808080"/>
<rect x="1030.20" y="132.50" width="6.00" height="1.150" fill="#d4d4d4"/>
<rect x="1037.20" y="132.50" width="1.00" height="1.150" fill="#d4d4d4"/>
<rect x="1038.20" y="132.50" width="2.00" height="1.150" fill="#808080"/>
<rect x="1040.20" y="132.50" width="6.00" height="1.150" fill="#569cd6"/>
<rect x="1046.20" y="132.50" width="1.00" height="1.150" fill="#808080"/>
<rect x="980.20" y="136.30" width="1.00" height="1.150" fill="#ffd700"/>
<rect x="981.20" y="136.30" width="1.00" height="1.150" fill="#ff8c1a"/>
<rect x="982.20" y="136.30" width="2.00" height="1.150" fill="#ffd700"/>
<rect x="985.20" y="136.30" width="6.00" height="1.150" fill="#6a9955"/>
<rect x="992.20" y="136.30" width="6.00" height="1.150" fill="#6a9955"/>
<rect x="999.20" y="136.30" width="3.00" height="1.150" fill="#ffd700"/>
<rect x="980.20" y="138.20" width="1.00" height="1.150" fill="#808080"/>
<rect x="981.20" y="138.20" width="1.00" height="1.150" fill="#569cd6"/>
<rect x="983.20" y="138.20" width="2.00" height="1.150" fill="#9cdcfe"/>
<rect x="985.20" y="138.20" width="1.00" height="1.150" fill="#d4d4d4"/>
<rect x="986.20" y="138.20" width="7.00" height="1.150" fill="#ce9178"/>
<rect x="993.20" y="138.20" width="1.00" height="1.150" fill="#808080"/>
<rect x="994.20" y="138.20" width="4.00" height="1.150" fill="#d4d4d4"/>
<rect x="999.20" y="138.20" width="3.00" height="1.150" fill="#d4d4d4"/>
<rect x="1003.20" y="138.20" width="3.00" height="1.150" fill="#d4d4d4"/>
<rect x="1007.20" y="138.20" width="6.00" height="1.150" fill="#d4d4d4"/>
<rect x="1013.20" y="138.20" width="2.00" height="1.150" fill="#808080"/>
<rect x="1015.20" y="138.20" width="1.00" height="1.150" fill="#569cd6"/>
<rect x="1016.20" y="138.20" width="1.00" height="1.150" fill="#808080"/>
<rect x="980.20" y="140.10" width="1.00" height="1.150" fill="#808080"/>
<rect x="981.20" y="140.10" width="6.00" height="1.150" fill="#569cd6"/>
<rect x="988.20" y="140.10" width="4.00" height="1.150" fill="#9cdcfe"/>
<rect x="992.20" y="140.10" width="1.00" height="1.150" fill="#d4d4d4"/>
<rect x="993.20" y="140.10" width="8.00" height="1.150" fill="#ce9178"/>
<rect x="1002.20" y="140.10" width="7.00" height="1.150" fill="#9cdcfe"/>
<rect x="1009.20" y="140.10" width="1.00" height="1.150" fill="#d4d4d4"/>
<rect x="1010.20" y="140.10" width="1.00" height="1.150" fill="#d4d4d4"/>
<rect x="1011.20" y="140.10" width="15.00" height="1.150" fill="#dcdcaa"/>
<rect x="1026.20" y="140.10" width="2.00" height="1.150" fill="#ffd700"/>
<rect x="1028.20" y="140.10" width="1.00" height="1.150" fill="#d4d4d4"/>
<rect x="1029.20" y="140.10" width="1.00" height="1.150" fill="#808080"/>
<rect x="1030.20" y="140.10" width="6.00" height="1.150" fill="#d4d4d4"/>
<rect x="1037.20" y="140.10" width="1.00" height="1.150" fill="#d4d4d4"/>
<rect x="1038.20" y="140.10" width="2.00" height="1.150" fill="#808080"/>
<rect x="1040.20" y="140.10" width="6.00" height="1.150" fill="#569cd6"/>
<rect x="1046.20" y="140.10" width="1.00" height="1.150" fill="#808080"/>
<rect x="980.20" y="142.00" width="1.00" height="1.150" fill="#ffd700"/>
<rect x="981.20" y="142.00" width="1.00" height="1.150" fill="#ff8c1a"/>
<rect x="982.20" y="142.00" width="2.00" height="1.150" fill="#ffd700"/>
<rect x="985.20" y="142.00" width="6.00" height="1.150" fill="#6a9955"/>
<rect x="992.20" y="142.00" width="10.00" height="1.150" fill="#6a9955"/>
<rect x="1003.20" y="142.00" width="2.00" height="1.150" fill="#6a9955"/>
<rect x="1006.20" y="142.00" width="6.00" height="1.150" fill="#6a9955"/>
<rect x="1013.20" y="142.00" width="3.00" height="1.150" fill="#ffd700"/>
<rect x="980.20" y="143.90" width="1.00" height="1.150" fill="#808080"/>
<rect x="981.20" y="143.90" width="6.00" height="1.150" fill="#569cd6"/>
<rect x="987.20" y="143.90" width="1.00" height="1.150" fill="#808080"/>
<rect x="982.20" y="145.80" width="8.00" height="1.150" fill="#569cd6"/>
<rect x="991.20" y="145.80" width="15.00" height="1.150" fill="#dcdcaa"/>
<rect x="1006.20" y="145.80" width="2.00" height="1.150" fill="#ffd700"/>
<rect x="1009.20" y="145.80" width="1.00" height="1.150" fill="#ffd700"/>
<rect x="984.20" y="147.70" width="8.00" height="1.150" fill="#9cdcfe"/>
<rect x="992.20" y="147.70" width="1.00" height="1.150" fill="#d4d4d4"/>
<rect x="993.20" y="147.70" width="14.00" height="1.150" fill="#dcdcaa"/>
<rect x="1007.20" y="147.70" width="1.00" height="1.150" fill="#da70d6"/>
<rect x="1008.20" y="147.70" width="7.00" height="1.150" fill="#ce9178"/>
<rect x="1015.20" y="147.70" width="1.00" height="1.150" fill="#da70d6"/>
<rect x="1016.20" y="147.70" width="1.00" height="1.150" fill="#d4d4d4"/>
<rect x="1017.20" y="147.70" width="9.00" height="1.150" fill="#9cdcfe"/>
<rect x="1027.20" y="147.70" width="1.00" height="1.150" fill="#d4d4d4"/>
<rect x="1029.20" y="147.70" width="7.00" height="1.150" fill="#ce9178"/>
<rect x="1037.20" y="147.70" width="3.00" height="1.150" fill="#ce9178"/>
<rect x="1041.20" y="147.70" width="8.00" height="1.150" fill="#ce9178"/>
<rect x="1050.20" y="147.70" width="10.00" height="1.150" fill="#ce9178"/>
<rect x="984.20" y="149.60" width="11.00" height="1.150" fill="#ce9178"/>
<rect x="999.20" y="149.60" width="2.00" height="1.150" fill="#ce9178"/>
<rect x="1001.20" y="149.60" width="1.00" height="1.150" fill="#d4d4d4"/>
<rect x="982.20" y="151.50" width="1.00" height="1.150" fill="#ffd700"/>
<rect x="980.20" y="153.40" width="2.00" height="1.150" fill="#808080"/>
<rect x="982.20" y="153.40" width="6.00" height="1.150" fill="#569cd6"/>
<rect x="988.20" y="153.40" width="1.00" height="1.150" fill="#808080"/>
<rect x="980.20" y="157.20" width="1.00" height="1.150" fill="#ffd700"/>
<rect x="981.20" y="157.20" width="1.00" height="1.150" fill="#ff8c1a"/>
<rect x="982.20" y="157.20" width="2.00" height="1.150" fill="#ffd700"/>
<rect x="985.20" y="157.20" width="6.00" height="1.150" fill="#6a9955"/>
<rect x="992.20" y="157.20" width="6.00" height="1.150" fill="#6a9955"/>
<rect x="999.20" y="157.20" width="3.00" height="1.150" fill="#ffd700"/>
<rect x="980.20" y="159.10" width="1.00" height="1.150" fill="#808080"/>
<rect x="981.20" y="159.10" width="1.00" height="1.150" fill="#569cd6"/>
<rect x="983.20" y="159.10" width="2.00" height="1.150" fill="#9cdcfe"/>
<rect x="985.20" y="159.10" width="1.00" height="1.150" fill="#d4d4d4"/>
<rect x="986.20" y="159.10" width="7.00" height="1.150" fill="#ce9178"/>
<rect x="993.20" y="159.10" width="1.00" height="1.150" fill="#808080"/>
<rect x="994.20" y="159.10" width="3.00" height="1.150" fill="#d4d4d4"/>
<rect x="998.20" y="159.10" width="3.00" height="1.150" fill="#d4d4d4"/>
<rect x="1002.20" y="159.10" width="3.00" height="1.150" fill="#d4d4d4"/>
<rect x="1006.20" y="159.10" width="8.00" height="1.150" fill="#d4d4d4"/>
<rect x="1014.20" y="159.10" width="2.00" height="1.150" fill="#808080"/>
<rect x="1016.20" y="159.10" width="1.00" height="1.150" fill="#569cd6"/>
<rect x="1017.20" y="159.10" width="1.00" height="1.150" fill="#808080"/>
<rect x="980.20" y="161.00" width="1.00" height="1.150" fill="#808080"/>
<rect x="981.20" y="161.00" width="6.00" height="1.150" fill="#569cd6"/>
<rect x="988.20" y="161.00" width="4.00" height="1.150" fill="#9cdcfe"/>
<rect x="992.20" y="161.00" width="1.00" height="1.150" fill="#d4d4d4"/>
<rect x="993.20" y="161.00" width="8.00" height="1.150" fill="#ce9178"/>
<rect x="1002.20" y="161.00" width="7.00" height="1.150" fill="#9cdcfe"/>
<rect x="1009.20" y="161.00" width="1.00" height="1.150" fill="#d4d4d4"/>
<rect x="1010.20" y="161.00" width="1.00" height="1.150" fill="#d4d4d4"/>
<rect x="1011.20" y="161.00" width="15.00" height="1.150" fill="#dcdcaa"/>
<rect x="1026.20" y="161.00" width="2.00" height="1.150" fill="#ffd700"/>
<rect x="1028.20" y="161.00" width="1.00" height="1.150" fill="#d4d4d4"/>
<rect x="1029.20" y="161.00" width="1.00" height="1.150" fill="#808080"/>
<rect x="1030.20" y="161.00" width="6.00" height="1.150" fill="#d4d4d4"/>
<rect x="1037.20" y="161.00" width="1.00" height="1.150" fill="#d4d4d4"/>
<rect x="1038.20" y="161.00" width="2.00" height="1.150" fill="#808080"/>
<rect x="1040.20" y="161.00" width="6.00" height="1.150" fill="#569cd6"/>
<rect x="1046.20" y="161.00" width="1.00" height="1.150" fill="#808080"/>
<rect x="980.20" y="162.90" width="1.00" height="1.150" fill="#ffd700"/>
<rect x="981.20" y="162.90" width="1.00" height="1.150" fill="#ff8c1a"/>
<rect x="982.20" y="162.90" width="2.00" height="1.150" fill="#ffd700"/>
<rect x="985.20" y="162.90" width="6.00" height="1.150" fill="#6a9955"/>
<rect x="992.20" y="162.90" width="10.00" height="1.150" fill="#6a9955"/>
<rect x="1003.20" y="162.90" width="2.00" height="1.150" fill="#6a9955"/>
<rect x="1006.20" y="162.90" width="2.00" height="1.150" fill="#6a9955"/>
<rect x="1009.20" y="162.90" width="8.00" height="1.150" fill="#6a9955"/>
<rect x="1018.20" y="162.90" width="4.00" height="1.150" fill="#6a9955"/>
<rect x="1023.20" y="162.90" width="3.00" height="1.150" fill="#ffd700"/>
<rect x="980.20" y="164.80" width="1.00" height="1.150" fill="#808080"/>
<rect x="981.20" y="164.80" width="6.00" height="1.150" fill="#569cd6"/>
<rect x="988.20" y="164.80" width="3.00" height="1.150" fill="#9cdcfe"/>
<rect x="991.20" y="164.80" width="1.00" height="1.150" fill="#d4d4d4"/>
<rect x="992.20" y="164.80" width="1.00" height="1.150" fill="#ce9178"/>
<rect x="993.20" y="164.80" width="16.00" height="1.150" fill="#ce9178"/>
<rect x="1009.20" y="164.80" width="1.00" height="1.150" fill="#ce9178"/>
<rect x="1010.20" y="164.80" width="1.00" height="1.150" fill="#808080"/>
<rect x="1011.20" y="164.80" width="2.00" height="1.150" fill="#808080"/>
<rect x="1013.20" y="164.80" width="6.00" height="1.150" fill="#569cd6"/>
<rect x="1019.20" y="164.80" width="1.00" height="1.150" fill="#808080"/>
<rect x="978.20" y="166.70" width="2.00" height="1.150" fill="#808080"/>
<rect x="980.20" y="166.70" width="4.00" height="1.150" fill="#569cd6"/>
<rect x="984.20" y="166.70" width="1.00" height="1.150" fill="#808080"/>
<rect x="976.20" y="168.60" width="2.00" height="1.150" fill="#808080"/>
<rect x="978.20" y="168.60" width="4.00" height="1.150" fill="#569cd6"/>
<rect x="982.20" y="168.60" width="1.00" height="1.150" fill="#808080"/>
</g>
<rect x="976" y="171.200" width="93.500" height="2" fill="#264f78"/>
<rect x="1070" y="100" width="1" height="703" fill="#3a3a3a"/>
<rect x="1071" y="474.800" width="14.500" height="2.600" fill="#989898"/>
</svg>
</div>
<div id="chr">
<div class="topline"></div><div class="leftline"></div>
<svg class="abs" style="left:0;top:0" width="450" height="46" viewBox="0 0 450 46">
  <path d="M6.500 46L17.500 19.600Q18 18.500 19.500 18.500H190.500Q192 18.500 192.500 19.600L203.500 46Z" fill="#f2f2f2"/>
  <path d="M1 45.500H6.500L17.500 19.600Q18 18.500 19.500 18.500H190.500Q192 18.500 192.500 19.600L203.500 45.500H450" fill="none" stroke="#b9b9b9" stroke-width="1"/>
  <path d="M202.200 26.700Q201.700 25.500 203.200 25.500H226.500Q227.800 25.500 228.300 26.600L233.700 39.400Q234.300 40.800 232.800 40.800H209.600Q208.300 40.800 207.800 39.700Z" fill="#d9d9d9" stroke="#d0d0d0" stroke-width="0.600"/>
  <!-- page icon -->
  <path d="M24.600 26.600H30.300L34 30.300V39.400H24.600Z M30.300 26.600V30.300H34" fill="#fff" stroke="#5a5a5a" stroke-width="1.100" stroke-linejoin="round"/>
  <!-- tab close -->
  <path d="M178.300 29.300 185.700 36.500M185.700 29.300 178.300 36.500" stroke="#4a4a4a" stroke-width="1.500" fill="none"/>
  <!-- user badge -->
  <rect x="289.200" y="1" width="22.800" height="18.800" fill="#b4b4b4"/>
  <circle cx="301" cy="8.100" r="2.300" fill="#fff"/><path d="M296.400 13.800c0-2.100 2.300-3.100 4.600-3.100s4.600 1 4.600 3.100z" fill="#fff"/>
  <!-- window controls -->
  <path d="M336.500 14.700H346" stroke="#a8a8a8" stroke-width="1.100" fill="none"/>
  <rect x="379.600" y="9.800" width="9.400" height="9.200" fill="none" stroke="#a8a8a8" stroke-width="1.100"/>
  <path d="M424.500 9.700 433.500 19M433.500 9.700 424.500 19" stroke="#a8a8a8" stroke-width="1.100" fill="none"/>
</svg>
<div id="tabtitle">JavaScript Ex2</div>
<div id="toolbar"></div>
<div id="omni"></div>
<svg class="abs" style="left:0;top:46px" width="450" height="35" viewBox="0 46 450 35" fill="none">
  <!-- back / forward -->
  <path d="M24 63.600H11.800M17.300 58 11.700 63.600 17.300 69.200" stroke="#cdcdcd" stroke-width="1.700"/>
  <path d="M38 63.600H50.200M44.700 58 50.300 63.600 44.700 69.200" stroke="#cdcdcd" stroke-width="1.700"/>
  <!-- reload -->
  <path d="M76.200 59.600A5.900 5.900 0 1 0 77.500 65.600" stroke="#4d4d4d" stroke-width="1.900"/>
  <path d="M78.600 56.800V62.300H73.100Z" fill="#4d4d4d"/>
  <!-- info -->
  <circle cx="103.200" cy="63.400" r="5.900" stroke="#5a5a5a" stroke-width="1.600"/>
  <path d="M103.200 62.400V67M103.200 59.600V61.200" stroke="#5a5a5a" stroke-width="1.700"/>
  <!-- zoom -->
  <circle cx="379.600" cy="62.600" r="4.700" stroke="#555" stroke-width="1.500"/>
  <path d="M383 66.200 386.300 69.500" stroke="#555" stroke-width="1.800"/>
  <path d="M377.300 62.600H381.900M379.600 60.300V64.900" stroke="#555" stroke-width="1.100"/>
  <!-- star -->
  <path d="M402 58.200 403.700 62.100 407.900 62.500 404.700 65.300 405.700 69.400 402 67.200 398.300 69.400 399.300 65.300 396.100 62.500 400.300 62.100Z" stroke="#555" stroke-width="1.400" stroke-linejoin="round"/>
  <!-- menu dots -->
  <circle cx="434" cy="59.600" r="1.500" fill="#555"/><circle cx="434" cy="64.400" r="1.500" fill="#555"/><circle cx="434" cy="69.200" r="1.500" fill="#555"/>
</svg>
<div id="url"><b>127.0.0.1</b>:5500/ex2/js_ex2.html</div>
<div id="page">
<h2>JavaScript Ex2: Insert JavaScript</h2>
<p id="ex2-1" style="top:165.600px">[Head] Aj.NesT the Series <svg class="emo" role="img" aria-label="👨🏻‍💻" width="22" height="22" viewBox="0 0 22 22"><rect x="0.6" y="0.6" width="20.800" height="20.800" rx="3.200" fill="#0b240f" stroke="#0d0d0d" stroke-width="1.200"/><g fill="#45b852"><rect x="1.8" y="1.9" width="1.7" height="1.9"/><rect x="4.2" y="1.9" width="1.7" height="1.9"/><rect x="6.6" y="1.9" width="1.7" height="1.9"/><rect x="9.0" y="1.9" width="1.7" height="1.9"/><rect x="11.4" y="1.9" width="1.7" height="1.9"/><rect x="13.8" y="1.9" width="1.7" height="1.9"/><rect x="16.2" y="1.9" width="1.7" height="1.9"/><rect x="18.6" y="1.9" width="1.7" height="1.9"/><rect x="1.8" y="4.5" width="1.7" height="1.9"/><rect x="4.2" y="4.5" width="1.7" height="1.9"/><rect x="16.2" y="4.5" width="1.7" height="1.9"/><rect x="18.6" y="4.5" width="1.7" height="1.9"/><rect x="1.8" y="7.1" width="1.7" height="1.9"/><rect x="4.2" y="7.1" width="1.7" height="1.9"/><rect x="16.2" y="7.1" width="1.7" height="1.9"/><rect x="18.6" y="7.1" width="1.7" height="1.9"/><rect x="1.8" y="9.7" width="1.7" height="1.9"/><rect x="4.2" y="9.7" width="1.7" height="1.9"/><rect x="16.2" y="9.7" width="1.7" height="1.9"/><rect x="18.6" y="9.7" width="1.7" height="1.9"/><rect x="1.8" y="12.3" width="1.7" height="1.9"/><rect x="18.6" y="12.3" width="1.7" height="1.9"/><rect x="1.8" y="14.9" width="1.7" height="1.9"/><rect x="18.6" y="14.9" width="1.7" height="1.9"/></g><path d="M1.800 20.600c0-3 1.400-4.800 3.800-5h10.800c2.400 0.200 3.800 2 3.800 5z" fill="#9263e6"/><rect x="9.300" y="11.200" width="3.800" height="2.200" fill="#ecd0bd"/><ellipse cx="11.200" cy="8" rx="4.500" ry="4.300" fill="#f5e0d0"/><path d="M7.300 6.300c0.200-1.800 1.200-3.400 3.400-3.900 2.600-0.500 4.900 1 5.100 3.700 0 0.300-0.100 0.500-0.300 0.300-1.700-0.200-3.300-1.100-4.300-2.300-0.900 1.200-2.100 1.900-3.900 2.200z" fill="#2b2b2b"/><rect x="8.400" y="7.500" width="1.500" height="1.600" rx="0.400" fill="#5e4d45"/><rect x="12.400" y="7.500" width="1.500" height="1.600" rx="0.400" fill="#5e4d45"/><rect x="4.700" y="12.300" width="12.900" height="7.600" rx="0.500" fill="#e6e6e6"/><rect x="8.800" y="14.300" width="4.800" height="0.700" fill="#f6f6f6"/><rect x="8.800" y="16.200" width="4.800" height="0.700" fill="#f6f6f6"/><rect x="3.300" y="17.300" width="1.700" height="2" rx="0.700" fill="#f5e0d0"/><rect x="17.300" y="17.300" width="1.700" height="2" rx="0.700" fill="#f5e0d0"/><rect x="4.700" y="19.100" width="12.900" height="1.700" fill="#2fb7ea"/></svg>.</p>
<button type="button" style="top:208.1px">Answer 1</button>
<p id="ex2-2" style="top:256.100px">[Body] I'm studying JavaScript Programming <svg class="emo" role="img" aria-label="💻" width="22" height="22" viewBox="0 0 22 22"><path d="M3 4.600h15.600a0.900 0.900 0 0 1 0.900 0.900v9.900h-17.400v-9.900a0.900 0.900 0 0 1 0.900-0.900z" fill="#9a9a9a" stroke="#242424" stroke-width="1.500" stroke-linejoin="round"/><rect x="3.700" y="6.200" width="14.200" height="8.600" fill="#1b1b1b"/><path d="M2.100 15.400h17.400l1.600 3.200a0.600 0.600 0 0 1-0.550 0.900h-19.500a0.600 0.600 0 0 1-0.550-0.900z" fill="#bdbdbd" stroke="#242424" stroke-width="1.400" stroke-linejoin="round"/><rect x="8" y="17.300" width="5.600" height="0.900" fill="#a3a3a3"/></svg>.</p>
<button type="button" style="top:298.5px">Answer 2</button>
<p id="ex2-3" style="top:347.400px">[External File] I'm great <svg class="emo" role="img" aria-label="😃" width="22" height="22" viewBox="0 0 22 22"><circle cx="11" cy="11" r="10.100" fill="#ffc83d" stroke="#2b2b2b" stroke-width="1.300"/><ellipse cx="7.400" cy="9.100" rx="1.150" ry="2.400" fill="#111"/><ellipse cx="14.600" cy="9.100" rx="1.150" ry="2.400" fill="#111"/><path d="M5.300 13.200h11.400c-0.400 3.800-2.700 6-5.700 6s-5.300-2.200-5.700-6z" fill="#1a1a1a"/><path d="M5.900 13.600h10.200v1.100c0 0.300-0.200 0.500-0.500 0.500h-9.200c-0.300 0-0.500-0.200-0.500-0.500z" fill="#fff"/><path d="M8.500 18.200c0.600-1.100 1.400-1.600 2.500-1.600s1.900 0.500 2.500 1.600c-0.700 0.600-1.500 0.900-2.500 0.900s-1.800-0.300-2.500-0.900z" fill="#f03a17"/></svg>.</p>
<button type="button" style="top:389.3px">Answer 3</button>
</div>

</div>
</body>
</html>
